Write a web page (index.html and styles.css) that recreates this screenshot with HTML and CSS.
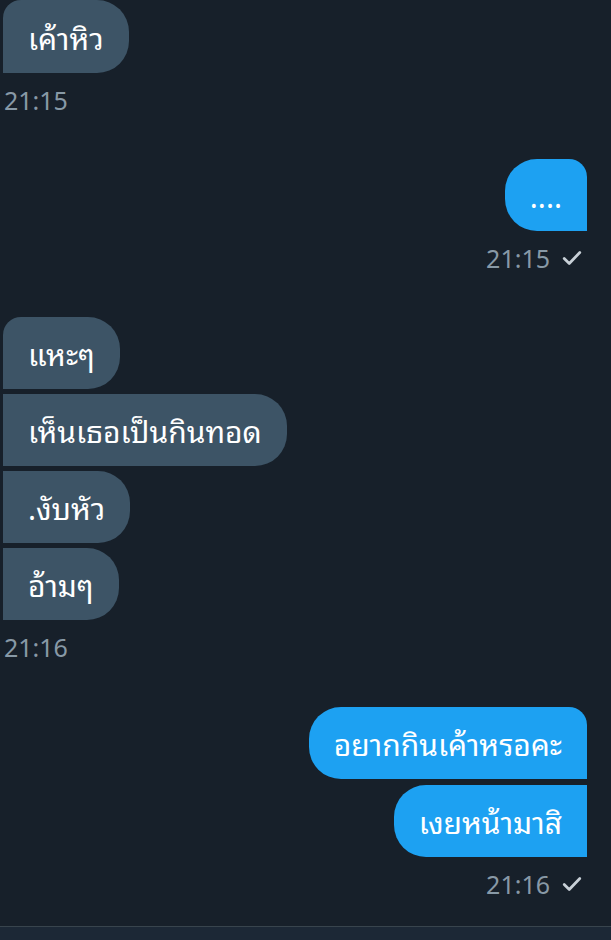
FILE: index.html
```html
<!DOCTYPE html>
<html lang="th">
<head>
<meta charset="utf-8">
<title>Chat</title>
<link rel="stylesheet" href="styles.css">
</head>
<body>
<div class="screen">
  <div class="chat">
    <div class="group received first-cut">
      <div class="bubble">เค้าหิว</div>
    </div>
    <div class="time">21:15</div>

    <div class="group sent">
      <div class="bubble">....</div>
    </div>
    <div class="time sent-time">21:15
      <svg class="check" viewBox="0 0 24 24" width="22" height="22"><path d="M3.5 12.5l5.5 5.5L20.5 6" fill="none" stroke="currentColor" stroke-width="3" stroke-linecap="round" stroke-linejoin="round"/></svg>
    </div>

    <div class="group received">
      <div class="bubble">แหะๆ</div>
      <div class="bubble">เห็นเธอเป็นกินทอด</div>
      <div class="bubble">.งับหัว</div>
      <div class="bubble">อ้ามๆ</div>
    </div>
    <div class="time">21:16</div>

    <div class="group sent last-group">
      <div class="bubble">อยากกินเค้าหรอคะ</div>
      <div class="bubble">เงยหน้ามาสิ</div>
    </div>
    <div class="time sent-time">21:16
      <svg class="check" viewBox="0 0 24 24" width="22" height="22"><path d="M3.5 12.5l5.5 5.5L20.5 6" fill="none" stroke="currentColor" stroke-width="3" stroke-linecap="round" stroke-linejoin="round"/></svg>
    </div>
  </div>
  <div class="composer"></div>
</div>
</body>
</html>
```
FILE: styles.css
```css
html, body {
  margin: 0;
  padding: 0;
}
body {
  background: #17202a;
  font-family: "Noto Sans Thai Looped", "Noto Sans Thai", "Noto Sans", sans-serif;
  color: #ffffff;
  width: 611px;
  height: 940px;
  overflow: hidden;
}
.screen {
  height: 940px;
  display: flex;
  flex-direction: column;
}
.chat {
  flex: 1;
  display: flex;
  flex-direction: column;
  padding: 0 24px 0 3px;
}
.group {
  display: flex;
  flex-direction: column;
  gap: 5px;
  margin-top: 43px;
}
.group.first-cut {
  margin-top: 0;
}
.group.first-cut .bubble {
  height: 73px;
}
.group.last-group {
  margin-top: 44px;
  gap: 6px;
}
.received {
  align-items: flex-start;
}
.sent {
  align-items: flex-end;
}
.bubble {
  height: 72px;
  box-sizing: border-box;
  padding: 0 25px;
  display: flex;
  align-items: center;
  font-size: 30px;
  line-height: 1;
  white-space: nowrap;
}
.received .bubble {
  background: #3d5466;
  border-radius: 0 32px 32px 0;
}
.received .bubble:first-child {
  border-top-left-radius: 18px;
}
.sent .bubble {
  background: #1da1f2;
  border-radius: 32px 0 0 32px;
}
.sent .bubble:first-child {
  border-top-right-radius: 18px;
}
.time {
  margin-top: 11px;
  font-family: "Noto Sans", sans-serif;
  font-size: 25px;
  line-height: 32px;
  color: #8899a6;
  padding-left: 1px;
  display: flex;
  align-items: center;
  gap: 11px;
}
.sent-time {
  justify-content: flex-end;
  padding-left: 0;
  padding-right: 4px;
}
.check {
  color: #c8d0d7;
}
.composer {
  height: 13px;
  background: #1c2836;
  border-top: 1px solid #38444d;
}
```
